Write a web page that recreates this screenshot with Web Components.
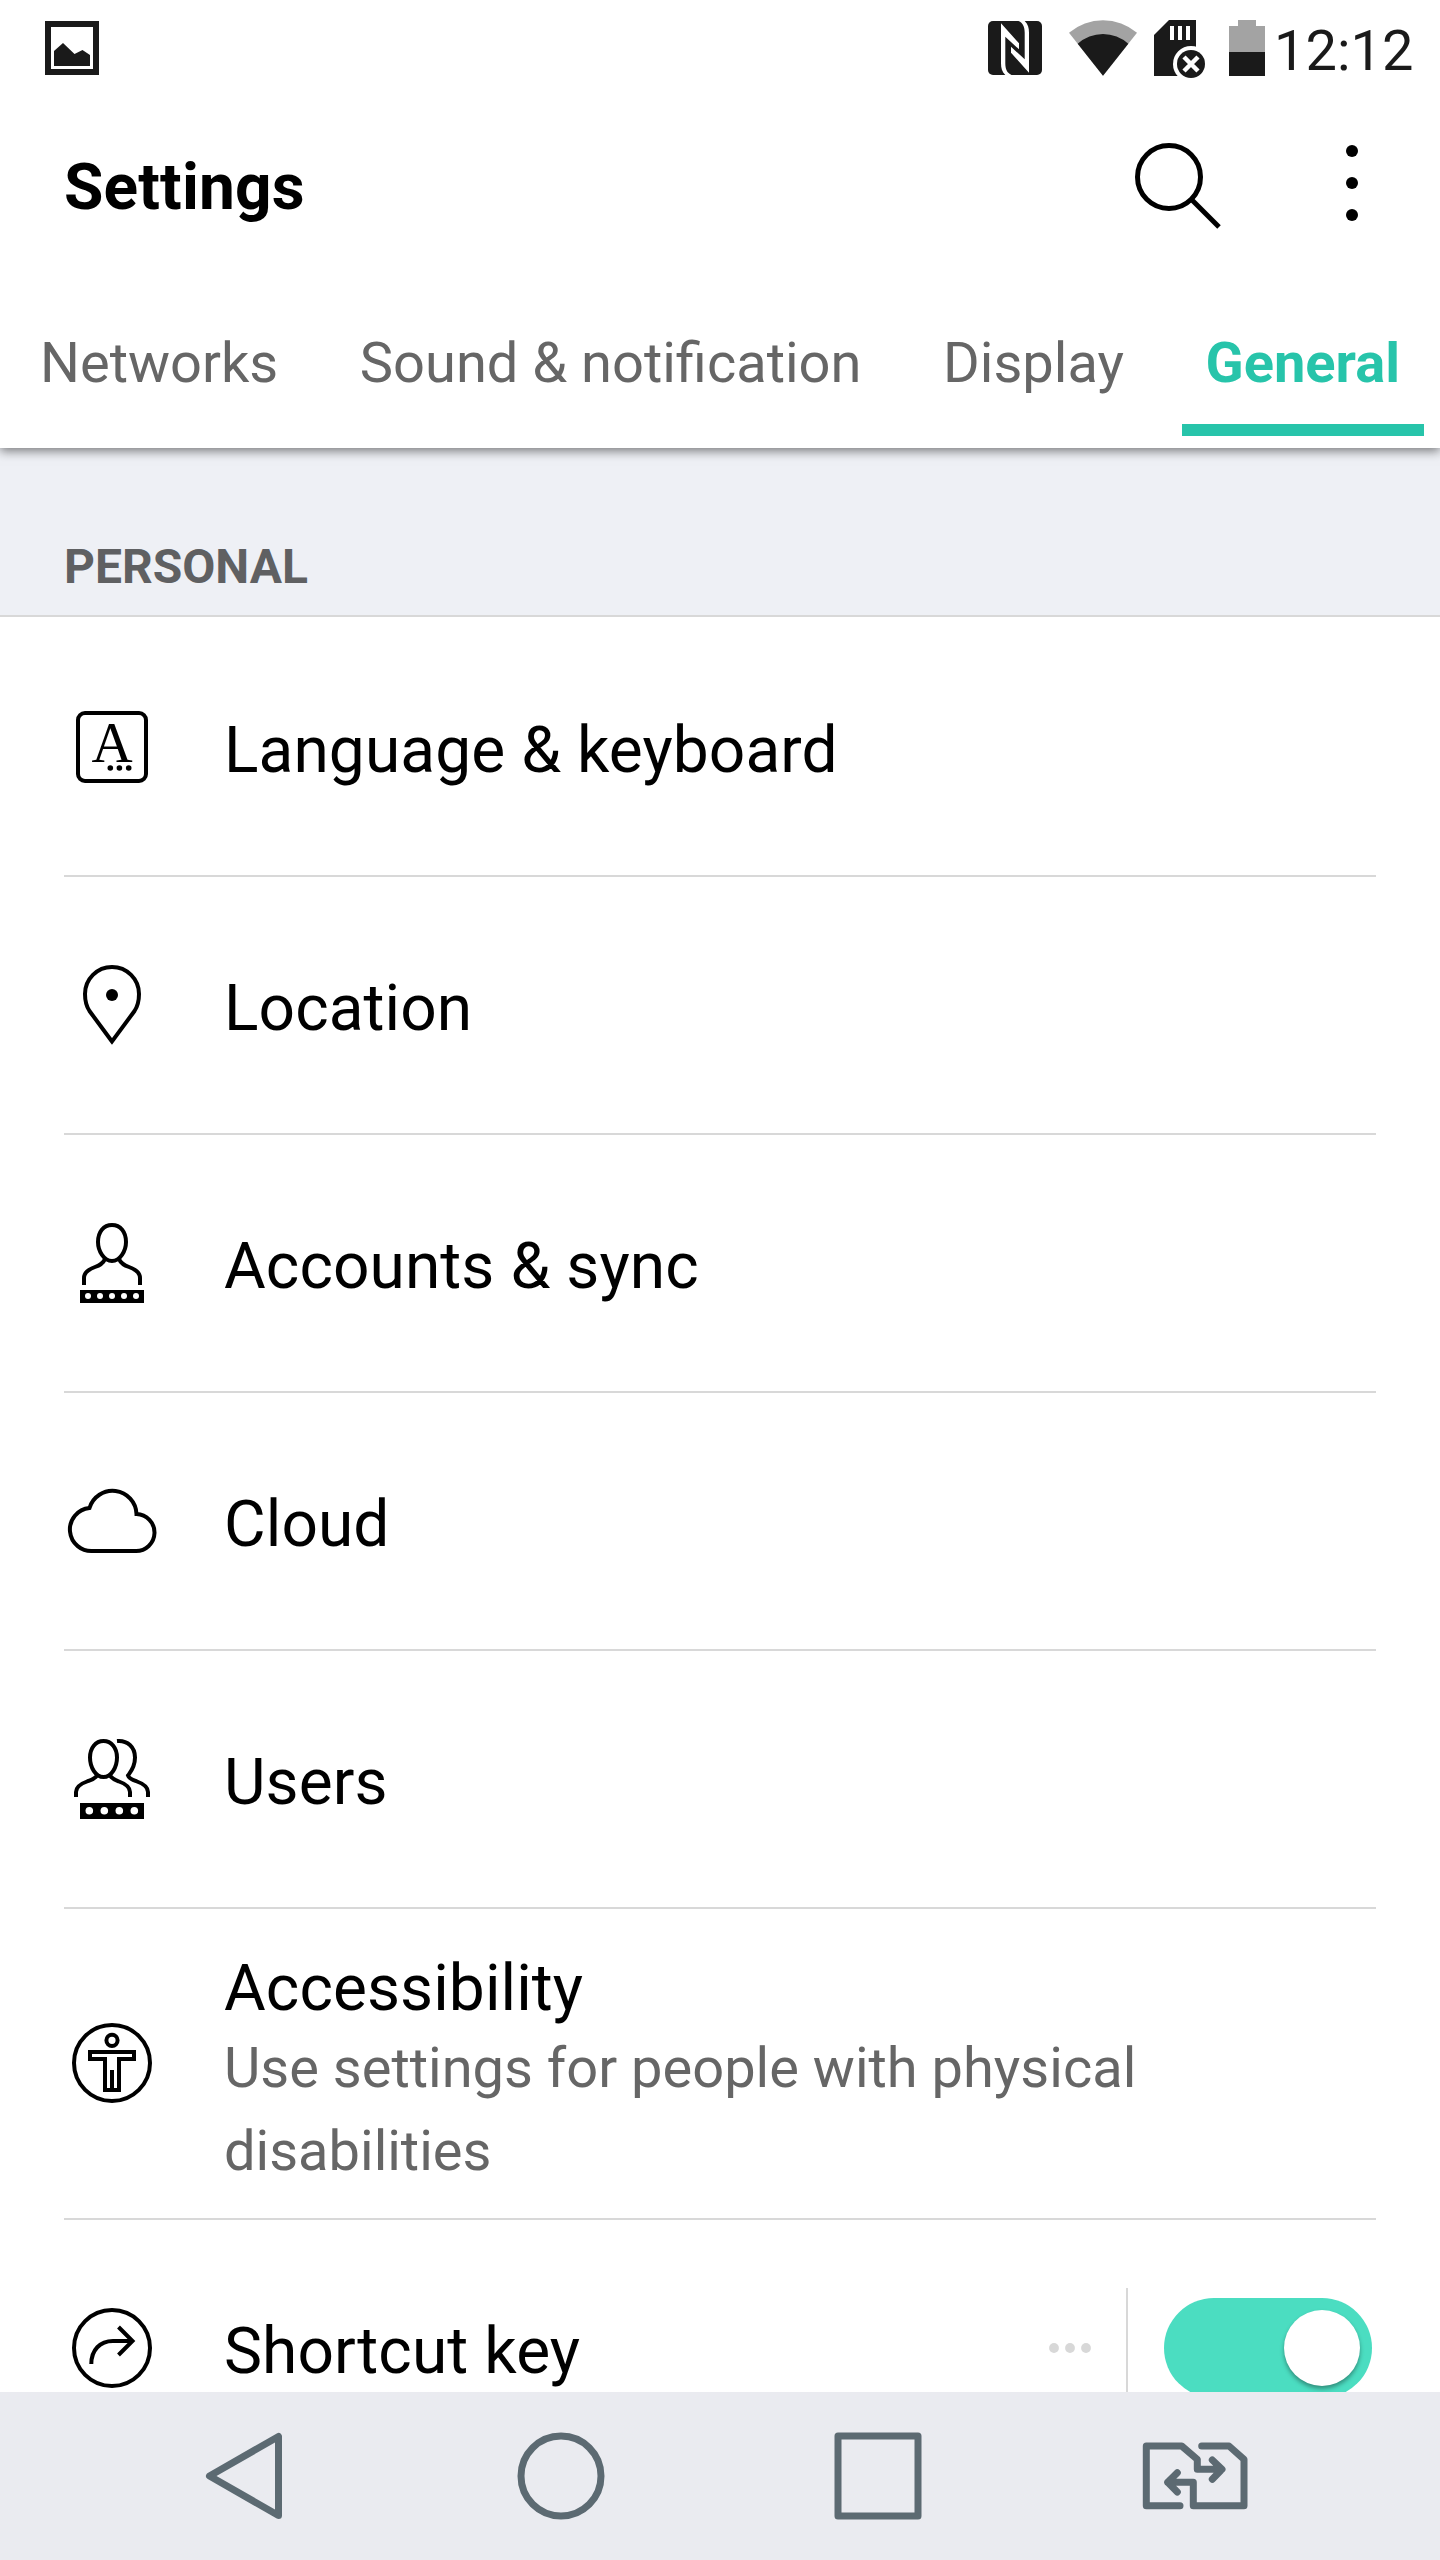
<!DOCTYPE html>
<html lang="en">
<head>
<meta charset="UTF-8">
<meta name="viewport" content="width=device-width, initial-scale=1.0">
<title>Settings</title>
<style>
body {
    margin: 0;
    background-color: #fff;
    color: #000;
    font-family: Roboto, "Liberation Sans", sans-serif;
}
</style>
</head>
<body>

<settings-screen>
    <status-bar slot="top" time="12:12"></status-bar>
    <app-header slot="top">Settings</app-header>
    <tab-strip slot="top">
        <tab-item>Networks</tab-item>
        <tab-item>Sound &amp; notification</tab-item>
        <tab-item>Display</tab-item>
        <tab-item selected>General</tab-item>
    </tab-strip>

    <section-header>PERSONAL</section-header>
    <settings-row icon="language">Language &amp; keyboard</settings-row>
    <settings-row icon="location">Location</settings-row>
    <settings-row icon="account">Accounts &amp; sync</settings-row>
    <settings-row icon="cloud">Cloud</settings-row>
    <settings-row icon="users">Users</settings-row>
    <settings-row icon="accessibility" tall>
        Accessibility
        <span slot="summary">Use settings for people with physical disabilities</span>
    </settings-row>
    <settings-row icon="shortcut">
        Shortcut key
        <toggle-switch slot="action"></toggle-switch>
    </settings-row>

    <nav-bar slot="bottom"></nav-bar>
</settings-screen>

<script>
    // Row icons, all on a 96x96 grid
    const ICONS = {
        language: `
            <rect x="14" y="14" width="68" height="68" rx="7"/>
            <text x="48" y="62.7" text-anchor="middle" font-family="Liberation Serif, serif" font-size="57" fill="#000" stroke="none">A</text>
            <g fill="#000" stroke="none">
                <circle cx="46.3" cy="69" r="2.8"/><circle cx="55.4" cy="69" r="2.8"/><circle cx="64.7" cy="69" r="2.8"/>
            </g>`,
        location: `
            <path d="M48 84.5L25.5 54C22.5 49.5 21 44 21 37A27 27 0 0 1 75 37C75 44 73.5 49.5 70.5 54Z"/>
            <circle cx="48" cy="38" r="6" fill="#000" stroke="none"/>`,
        account: `
            <path d="M48 10C56.5 10 62 17 62 27C62 36 56 46 48 46C40 46 34 36 34 27C34 17 39.5 10 48 10Z"/>
            <path d="M41 44C39 49 35 50.5 31 52C24 54.5 20 57.5 20 63V70"/>
            <path d="M55 44C57 49 61 50.5 65 52C72 54.5 76 57.5 76 63V70"/>
            <rect x="16" y="75" width="64" height="13" fill="#000" stroke="none"/>
            <g fill="#fff" stroke="none">
                <circle cx="24" cy="81" r="3"/><circle cx="36" cy="81" r="3"/><circle cx="48" cy="81" r="3"/><circle cx="60" cy="81" r="3"/><circle cx="72" cy="81" r="3"/>
            </g>`,
        cloud: `
            <path d="M29.5 78A21.5 21.5 0 0 1 25.5 35A24 24 0 0 1 72.5 41A18.5 18.5 0 0 1 71.5 78Z"/>`,
        users: `
            <path d="M39.5 10C47.5 10 53 17 53 26.5C53 36 47.5 46 39.5 46C31.5 46 26 36 26 26.5C26 17 31.5 10 39.5 10Z"/>
            <path d="M33 44.5C31 48 27 49 23 50.5C16 53 12 56 12 61V66"/>
            <path d="M46 44.5C48 48 51 49 55 50.5C62 53 66 56 66 61V66"/>
            <path d="M53 10C63.5 9 71 16 71 26.5C71 36 67 40.5 64 44.5C65 48 69 49 73 50.5C80 53 84 56 84 61V66"/>
            <rect x="16" y="72" width="64" height="16" fill="#000" stroke="none"/>
            <g fill="#fff" stroke="none">
                <circle cx="25.3" cy="79.7" r="3.8"/><circle cx="40.3" cy="79.7" r="3.8"/><circle cx="55.3" cy="79.7" r="3.8"/><circle cx="70.3" cy="79.7" r="3.8"/>
            </g>`,
        accessibility: `
            <circle cx="48" cy="48" r="38"/>
            <circle cx="48" cy="25.3" r="5.6"/>
            <path d="M26 37H70V44H55V75H41V44H26ZM48 55V75"/>`,
        shortcut: `
            <circle cx="48" cy="48" r="38"/>
            <path d="M27.3 64C27.3 50 36 41 49 41H68M54.5 27L68.5 41L54.5 55"/>`
    };

    class SettingsScreen extends HTMLElement {
        constructor() {
            super();
            this.attachShadow({ mode: 'open' }).innerHTML = `
                <style>
                    :host {
                        display: flex;
                        flex-direction: column;
                        width: 1440px;
                        height: 2560px;
                        overflow: hidden;
                    }

                    header {
                        position: relative; /* keeps the shadow above the list */
                        flex: none;
                        background-color: #fff;
                        box-shadow: 0 3px 10px rgba(0, 0, 0, 0.5);
                    }

                    main {
                        flex: 1;
                        min-height: 0;
                        overflow: hidden;
                    }
                </style>
                <header><slot name="top"></slot></header>
                <main><slot></slot></main>
                <slot name="bottom"></slot>
            `;
        }
    }

    class StatusBar extends HTMLElement {
        constructor() {
            super();
            this.attachShadow({ mode: 'open' }).innerHTML = `
                <style>
                    :host {
                        display: flex;
                        align-items: center;
                        height: 96px;
                        padding: 0 28px 0 45px;
                        box-sizing: border-box;
                        color: #1a1a1a;
                    }

                    svg {
                        display: block;
                        flex: none;
                        fill: #1a1a1a;
                    }

                    .right {
                        display: flex;
                        align-items: center;
                        margin-left: auto;
                    }

                    .wifi { margin-left: 27px; }
                    .card { margin-left: 17px; }
                    .battery { margin-left: 24px; }

                    .time {
                        width: 138px;
                        margin-left: 9px;
                        padding-top: 6px;
                        font-size: 56px;
                        line-height: 60px;
                        white-space: nowrap;
                    }
                </style>
                <svg width="54" height="60" viewBox="0 0 54 60">
                    <path fill-rule="evenodd" d="M0 3H54V57H0ZM6 9V51H48V9Z"/>
                    <path d="M9 33L18 25L29.5 36L37.5 32L45 37V48H9Z"/>
                </svg>
                <div class="right">
                    <svg width="54" height="60" viewBox="0 0 54 60">
                        <rect y="3" width="54" height="54" rx="5"/>
                        <path fill="#fff" d="M13 5.3L31 25.3V31.3L17.3 18.7V45.3C17.3 51 19 55 23.5 57H17.3C14 54 13 50 13 45.3Z"/>
                        <path fill="#fff" d="M41 54.7L23 34.7V28.7L36.7 41.3V14.7C36.7 9 35 5 30.5 3H36.7C40 6 41 10 41 14.7Z"/>
                    </svg>
                    <svg class="wifi" width="68" height="60" viewBox="0 0 68 60">
                        <path fill="#a3a3a3" d="M34 57.7L0 14.7A52.8 52.8 0 0 1 68 14.7Z"/>
                        <path d="M34 57.7L8.7 25.7A37.5 37.5 0 0 1 59.3 25.7Z"/>
                    </svg>
                    <svg class="card" width="51" height="60" viewBox="0 0 51 60">
                        <path d="M0 17L15 2H42V58H0Z"/>
                        <path fill="#fff" d="M16 8H20V22H16ZM24 8H28V22H24ZM32 8H36V22H32Z"/>
                        <circle cx="37" cy="46" r="18" fill="#fff"/>
                        <circle cx="37" cy="46" r="14"/>
                        <path stroke="#fff" stroke-width="4.5" d="M30 39L44 53M44 39L30 53"/>
                    </svg>
                    <svg class="battery" width="36" height="60" viewBox="0 0 36 60">
                        <path fill="#a3a3a3" d="M9 2H27V8H36V34H0V8H9Z"/>
                        <path d="M0 34H36V58H0Z"/>
                    </svg>
                    <div class="time"></div>
                </div>
            `;
            this.shadowRoot.querySelector('.time').textContent = this.getAttribute('time');
        }
    }

    class AppHeader extends HTMLElement {
        constructor() {
            super();
            this.attachShadow({ mode: 'open' }).innerHTML = `
                <style>
                    :host {
                        display: flex;
                        align-items: center;
                        gap: 115px;
                        height: 182px;
                        padding: 0 76px 0 64px;
                        box-sizing: border-box;
                    }

                    h1 {
                        flex: 1;
                        margin: 0;
                        padding-top: 2px;
                        font-size: 64px;
                        font-weight: bold;
                        letter-spacing: 0.15px;
                        line-height: 76px;
                    }
                </style>
                <h1><slot></slot></h1>
                <svg width="96" height="96" viewBox="0 0 96 96" fill="none" stroke="#000" stroke-width="5">
                    <circle cx="40" cy="38" r="31.5"/>
                    <path d="M63 61L90 88"/>
                </svg>
                <svg width="24" height="96" viewBox="0 0 24 96">
                    <circle cx="12" cy="12" r="6"/><circle cx="12" cy="44" r="6"/><circle cx="12" cy="76" r="6"/>
                </svg>
            `;
        }
    }

    class TabStrip extends HTMLElement {
        constructor() {
            super();
            this.attachShadow({ mode: 'open' }).innerHTML = `
                <style>
                    :host {
                        display: flex;
                        justify-content: space-between;
                        height: 170px;
                        padding: 0 16px 12px;
                        box-sizing: border-box;
                    }
                </style>
                <slot></slot>
            `;
        }
    }

    class TabItem extends HTMLElement {
        constructor() {
            super();
            this.attachShadow({ mode: 'open' }).innerHTML = `
                <style>
                    :host {
                        display: flex;
                        align-items: center;
                        padding: 24px 24px 0;
                        border-bottom: 12px solid transparent;
                        color: #666;
                        font-size: 56px;
                        white-space: nowrap;
                    }

                    :host([selected]) {
                        border-color: #27c4aa;
                        color: #27c4aa;
                        font-weight: bold;
                    }
                </style>
                <slot></slot>
            `;
        }
    }

    class SectionHeader extends HTMLElement {
        constructor() {
            super();
            this.attachShadow({ mode: 'open' }).innerHTML = `
                <style>
                    :host {
                        display: flex;
                        align-items: flex-end;
                        height: 169px;
                        margin-bottom: 2px;
                        padding: 0 64px 20px;
                        border-bottom: 2px solid #d8d8d8;
                        box-sizing: border-box;
                        background-color: #eef0f5;
                        color: #5f6062;
                        font-size: 48px;
                        font-weight: bold;
                        line-height: 56px;
                    }
                </style>
                <slot></slot>
            `;
        }
    }

    class SettingsRow extends HTMLElement {
        constructor() {
            super();
            this.attachShadow({ mode: 'open' }).innerHTML = `
                <style>
                    :host {
                        display: flex;
                        align-items: center;
                        height: 258px;
                        margin: 0 64px;
                        border-bottom: 2px solid #d8d8d8;
                        box-sizing: border-box;
                    }

                    :host([tall]) {
                        height: 311px;
                    }

                    svg {
                        flex: none;
                        margin-right: 64px;
                    }

                    :host([tall]) svg {
                        margin-bottom: 1px;
                    }

                    .text {
                        flex: 1;
                        padding-top: 6px;
                    }

                    :host([tall]) .text {
                        padding-top: 15px;
                    }

                    .title {
                        font-size: 64px;
                        letter-spacing: 0.08px;
                        line-height: 77px;
                    }

                    .summary {
                        color: #666;
                        font-size: 56px;
                        line-height: 83px;
                    }
                </style>
                <svg width="96" height="96" viewBox="0 0 96 96" fill="none" stroke="#000" stroke-width="4">${ICONS[this.getAttribute('icon')]}</svg>
                <div class="text">
                    <div class="title"><slot></slot></div>
                    <div class="summary"><slot name="summary"></slot></div>
                </div>
                <slot name="action"></slot>
            `;
        }
    }

    class ToggleSwitch extends HTMLElement {
        constructor() {
            super();
            this.attachShadow({ mode: 'open' }).innerHTML = `
                <style>
                    :host {
                        display: flex;
                        align-items: center;
                        margin-right: 4px;
                    }

                    .divider {
                        width: 2px;
                        height: 120px;
                        margin: 0 36px 0 35px;
                        background-color: #d8d8d8;
                    }

                    .track {
                        display: flex;
                        align-items: center;
                        justify-content: flex-end;
                        width: 208px;
                        height: 100px;
                        padding-right: 12px;
                        box-sizing: border-box;
                        border-radius: 50px;
                        background-color: #4bddc1;
                    }

                    .knob {
                        width: 76px;
                        height: 76px;
                        border-radius: 50%;
                        background-color: #fff;
                        box-shadow: 0 3px 4px rgba(0, 0, 0, 0.35);
                    }
                </style>
                <svg width="42" height="10" viewBox="0 0 42 10" fill="#d8d8d8">
                    <circle cx="5" cy="5" r="4.9"/><circle cx="21" cy="5" r="4.9"/><circle cx="37" cy="5" r="4.9"/>
                </svg>
                <div class="divider"></div>
                <div class="track"><div class="knob"></div></div>
            `;
        }
    }

    class NavBar extends HTMLElement {
        constructor() {
            super();
            this.attachShadow({ mode: 'open' }).innerHTML = `
                <style>
                    :host {
                        display: grid;
                        flex: none;
                        grid-template-columns: repeat(4, 1fr);
                        place-items: center;
                        height: 168px;
                        padding: 0 86.5px 0 85.5px;
                        background-color: #eaebf0;
                    }

                    svg {
                        fill: none;
                        stroke: #5c6a72;
                        stroke-width: 7;
                        stroke-linejoin: round;
                        stroke-linecap: round;
                    }
                </style>
                <svg width="96" height="96" viewBox="0 0 96 96"><path d="M13.5 48L82.5 8.5V87.5Z"/></svg>
                <svg width="96" height="96" viewBox="0 0 96 96"><circle cx="48" cy="48" r="40"/></svg>
                <svg width="96" height="96" viewBox="0 0 96 96"><rect x="8" y="8" width="80" height="80"/></svg>
                <svg width="118" height="96" viewBox="0 0 118 96">
                    <path d="M44 77.7H10.3V18H45.7L61.3 31.3V41.3H85.7M76.3 32L86 41.3L76.3 51.3"/>
                    <path d="M65.7 18H93L108 31.3V77.7H57.3V54.3H31.7M41.3 44.7L31.7 54.3L41.3 64"/>
                </svg>
            `;
        }
    }

    customElements.define('settings-screen', SettingsScreen);
    customElements.define('status-bar', StatusBar);
    customElements.define('app-header', AppHeader);
    customElements.define('tab-strip', TabStrip);
    customElements.define('tab-item', TabItem);
    customElements.define('section-header', SectionHeader);
    customElements.define('settings-row', SettingsRow);
    customElements.define('toggle-switch', ToggleSwitch);
    customElements.define('nav-bar', NavBar);
</script>

</body>
</html>
